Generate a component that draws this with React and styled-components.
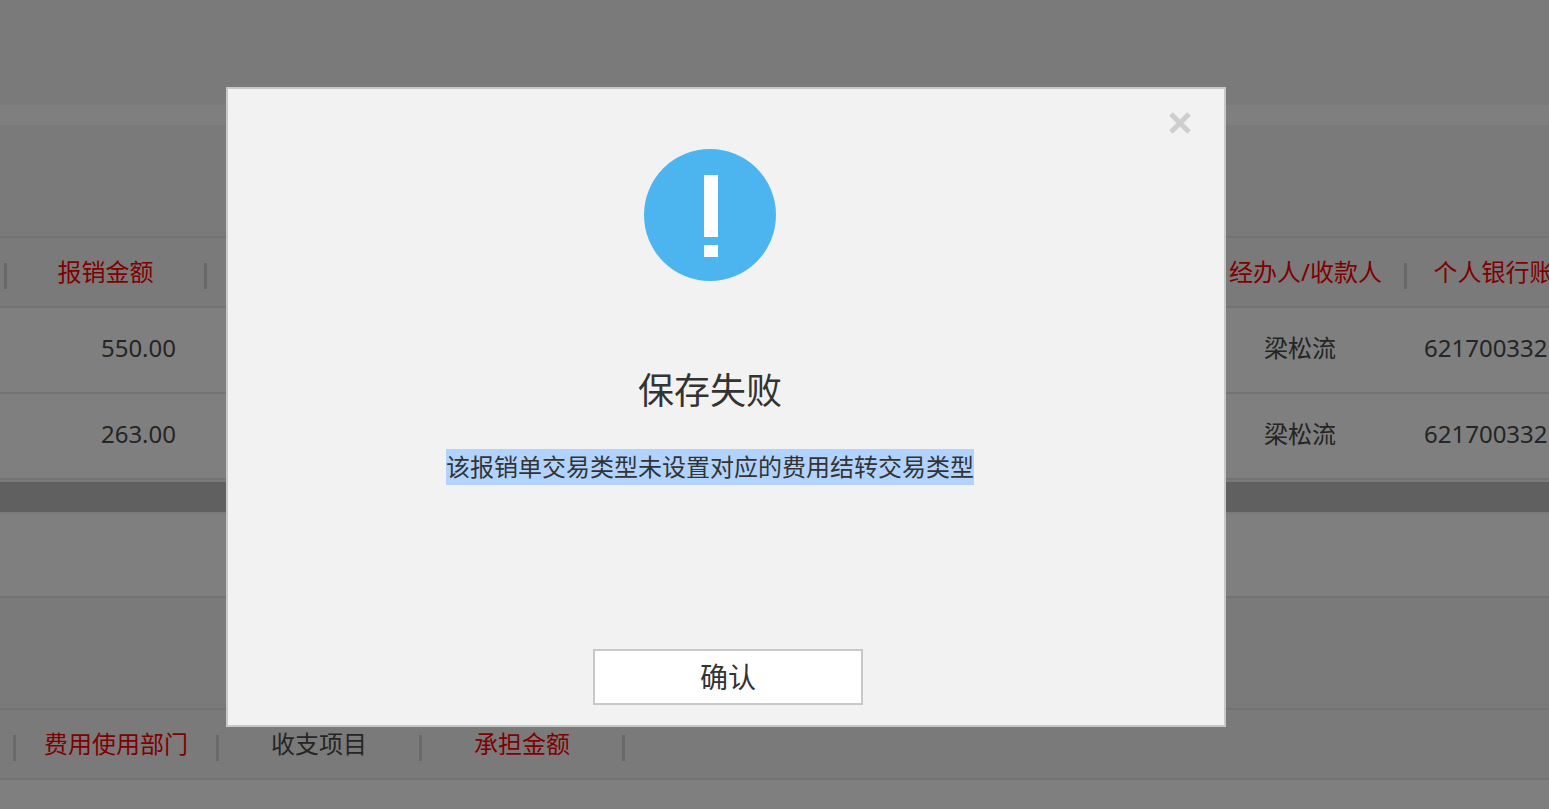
import styled, { createGlobalStyle } from "styled-components";

const GlobalStyle = createGlobalStyle`
  * {
    box-sizing: border-box;
  }

  body {
    margin: 0;
    background: #ffffff;
    color: #4a4a4a;
    font-family: "Noto Sans", "Noto Sans CJK SC", sans-serif;
    font-size: 24px;
    line-height: 36px;
  }

  button {
    font-family: inherit;
    color: inherit;
  }
`;

const Page = styled.main`
  height: 100vh;
  overflow: hidden;
`;

const Band = styled.div`
  height: ${({ $height }) => $height}px;
  background: ${({ $plain }) => ($plain ? "#ffffff" : "#f5f5f5")};
`;

const SectionHead = styled.div`
  height: 112px;
  border-top: 2px solid #e6e6e6;
  background: #f5f5f5;
`;

const Scrollbar = styled.div`
  height: 34px;
  border: solid #f5f5f5;
  border-width: 2px 0;
  background: #c1c1c1;
`;

const TableWrap = styled.div`
  overflow: hidden;
  padding-left: ${({ $indent }) => $indent || 0}px;
  background: linear-gradient(#e6e6e6 2px, #f5f5f5 2px 70px, #e6e6e6 70px 72px, #ffffff 72px);
`;

const Table = styled.table`
  width: ${({ $width }) => $width}px;
  table-layout: fixed;
  border-collapse: separate;
  border-spacing: 0;
`;

const HeadCell = styled.th`
  width: ${({ $width }) => $width}px;
  height: 72px;
  padding: 0;
  border: solid #e6e6e6;
  border-width: 2px 0;
  background: #f5f5f5;
  color: ${({ $required }) => ($required ? "#ff0000" : "inherit")};
  font-weight: 400;
  white-space: nowrap;
`;

const HeadInner = styled.div`
  display: flex;
  align-items: center;
  padding-left: 4px;
`;

const Divider = styled.span`
  flex: none;
  width: 3px;
  height: 26px;
  margin-top: 8px;
  background: #d2d2d2;
`;

const HeadLabel = styled.span`
  flex: 1;
  padding-left: 4px;
  text-align: center;
`;

const Cell = styled.td`
  height: 86px;
  padding: 0 24px 4px;
  border-bottom: 2px solid #e6e6e6;
  background: #ffffff;
  text-align: ${({ $align }) => $align || "left"};
  white-space: nowrap;
`;

const Overlay = styled.div`
  position: fixed;
  inset: 0;
  display: flex;
  justify-content: center;
  align-items: flex-start;
  padding: 87px 97px 0 0;
  background: rgba(0, 0, 0, 0.5);
`;

const Dialog = styled.section`
  position: relative;
  display: flex;
  flex-direction: column;
  width: 1000px;
  min-height: 640px;
  border: 2px solid #c8c8c8;
  background: #f2f2f2;
  color: #333333;
`;

const CloseButton = styled.button`
  position: absolute;
  top: 22px;
  right: 32px;
  display: flex;
  padding: 0;
  border: 0;
  background: none;
  cursor: pointer;
`;

const Content = styled.div`
  display: flex;
  flex-direction: column;
  align-items: center;
  padding: 60px 32px 0 0;
`;

const Title = styled.h2`
  margin: 86px 0 34px;
  font-size: 36px;
  font-weight: 400;
  line-height: 48px;
`;

const Message = styled.p`
  margin: 0;
  background: #b1d3fd;
`;

const Footer = styled.div`
  display: flex;
  justify-content: center;
  margin-top: auto;
  padding: 0 0 20px 4px;
`;

const ConfirmButton = styled.button`
  width: 270px;
  height: 56px;
  padding: 0;
  border: 2px solid #c8c8c8;
  background: #ffffff;
  font-size: 28px;
  line-height: 50px;
  cursor: pointer;
`;

const expenseColumns = ["报销金额", "", "", "", "", "", "经办人/收款人", "个人银行账户"];

const expenses = [
  { amount: "550.00", person: "梁松流", account: "621700332" },
  { amount: "263.00", person: "梁松流", account: "621700332" },
];

const shareColumns = [
  { label: "费用使用部门", required: true },
  { label: "收支项目" },
  { label: "承担金额", required: true },
  { label: "" },
];

function HeaderCell({ label, required, width }) {
  return (
    <HeadCell scope="col" $width={width} $required={required}>
      <HeadInner>
        <Divider />
        <HeadLabel>{label}</HeadLabel>
      </HeadInner>
    </HeadCell>
  );
}

function WarningIcon() {
  return (
    <svg width="132" height="132" viewBox="0 0 132 132" aria-hidden="true">
      <circle cx="66" cy="66" r="66" fill="#4cb5f0" />
      <rect x="60" y="26" width="14" height="62" fill="#ffffff" />
      <rect x="60" y="96" width="14" height="12" fill="#ffffff" />
    </svg>
  );
}

function CloseIcon() {
  return (
    <svg width="24" height="24" viewBox="0 0 24 24" aria-hidden="true">
      <path d="M3 3L21 21M21 3L3 21" stroke="#cecece" strokeWidth="5" />
    </svg>
  );
}

export default function App() {
  return (
    <>
      <GlobalStyle />
      <Page>
        <Band $height={105} />
        <Band $height={20} $plain />
        <Band $height={111} />

        <TableWrap>
          <Table $width={1600}>
            <thead>
              <tr>
                {expenseColumns.map((label, index) => (
                  <HeaderCell key={index} label={label} width={200} required />
                ))}
              </tr>
            </thead>
            <tbody>
              {expenses.map((row, index) => (
                <tr key={index}>
                  <Cell $align="right">{row.amount}</Cell>
                  <Cell colSpan={5} />
                  <Cell $align="center">{row.person}</Cell>
                  <Cell>{row.account}</Cell>
                </tr>
              ))}
            </tbody>
          </Table>
        </TableWrap>

        <Scrollbar />
        <Band $height={82} $plain />
        <SectionHead />

        <TableWrap $indent={9}>
          <Table $width={812}>
            <thead>
              <tr>
                {shareColumns.map((column, index) => (
                  <HeaderCell key={index} width={203} {...column} />
                ))}
              </tr>
            </thead>
          </Table>
        </TableWrap>
      </Page>

      <Overlay>
        <Dialog role="alertdialog" aria-labelledby="dialog-title">
          <CloseButton type="button" aria-label="关闭">
            <CloseIcon />
          </CloseButton>
          <Content>
            <WarningIcon />
            <Title id="dialog-title">保存失败</Title>
            <Message>该报销单交易类型未设置对应的费用结转交易类型</Message>
          </Content>
          <Footer>
            <ConfirmButton type="button">确认</ConfirmButton>
          </Footer>
        </Dialog>
      </Overlay>
    </>
  );
}
